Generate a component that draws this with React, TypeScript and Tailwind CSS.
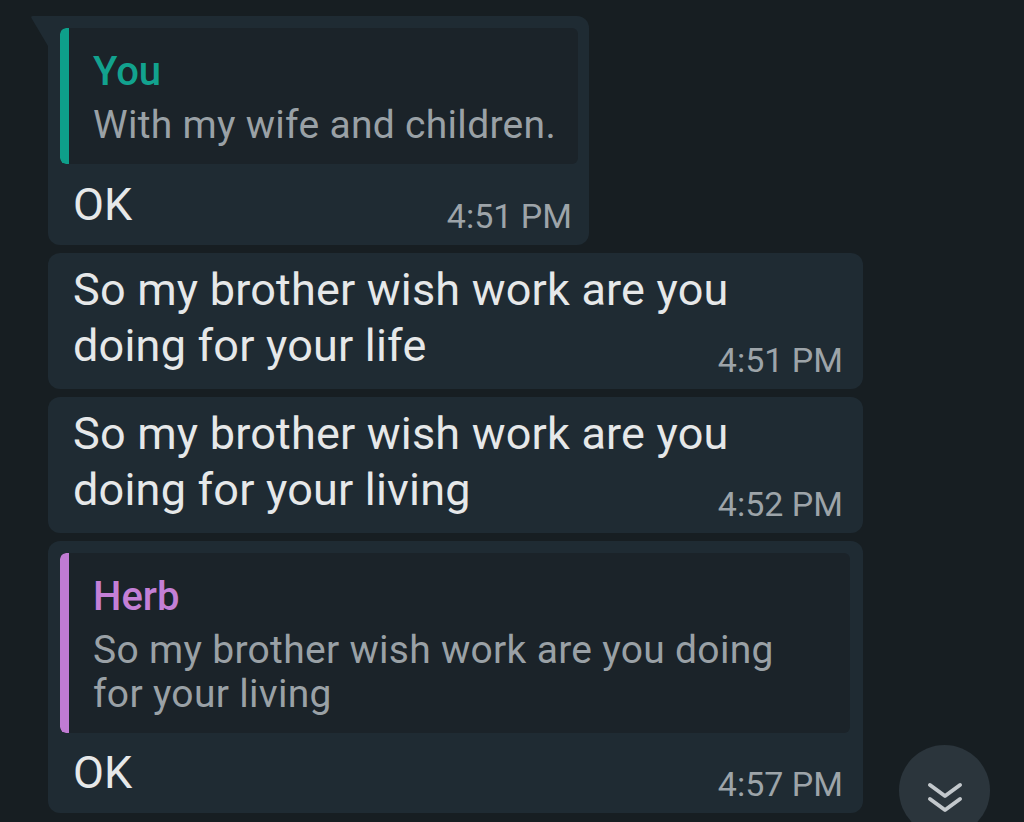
import { ReactNode } from 'react'

const Quote = ({
  name,
  color,
  bar,
  children,
}: {
  name: string
  color: string
  bar: string
  children: ReactNode
}) => {
  return (
    <div className="flex rounded-[6px] bg-[#1b2329] overflow-hidden">
      <div className={`w-[9px] shrink-0 rounded-l-[6px] ${bar}`}></div>
      <div className="pl-[24px] pr-[20px] pt-[21px] pb-[17px]">
        <div className={`text-[40px] leading-[45px] font-medium ${color}`}>
          {name}
        </div>
        <div className="mt-[9px] text-[39px] leading-[44px] tracking-[0.3px] text-[#9aa1a6]">
          {children}
        </div>
      </div>
    </div>
  )
}

const Time = ({ t, className }: { t: string; className: string }) => (
  <div
    className={`flex justify-end text-[34px] leading-[40px] text-[#9da4a9] ${className}`}
  >
    {t}
  </div>
)

export default function App() {
  return (
    <div
      className="relative h-[822px] w-[1024px] overflow-hidden bg-[#171e22]"
      style={{ fontFamily: 'Roboto, "Noto Sans", sans-serif' }}
    >
      <div className="flex flex-col gap-[8px] pl-[48px] pt-[16px]">
        {/* reply from me */}
        <div className="relative w-[541px] rounded-[12px] rounded-tl-none bg-[#1f2b33] pt-[12px] pl-[12px] pr-[11px] pb-[9px]">
          <svg
            className="absolute left-[-18px] top-0"
            width="18"
            height="30"
            viewBox="0 0 18 30"
          >
            <path d="M18 0 L3 0 Q0 0 2 3 L18 30 Z" fill="#1f2b33" />
          </svg>
          <Quote name="You" color="text-[#12a28e]" bar="bg-[#0e9f8a]">
            With my wife and children.
          </Quote>
          <div className="mt-[13px] pl-[13px] text-[45px] leading-[56px] text-[#e6e8e9]">
            OK
          </div>
          <Time t="4:51 PM" className="-mt-[37px] pr-[6px]" />
        </div>

        <div className="w-[815px] rounded-[12px] bg-[#1f2b33] pt-[9px] pl-[25px] pr-[20px] pb-[9px]">
          <div className="text-[45px] leading-[56px] tracking-[0.2px] text-[#e6e8e9]">
            So my brother wish work are you
            <br />
            doing for your life
          </div>
          <Time t="4:51 PM" className="-mt-[34px]" />
        </div>

        <div className="w-[815px] rounded-[12px] bg-[#1f2b33] pt-[9px] pl-[25px] pr-[20px] pb-[9px]">
          <div className="text-[45px] leading-[56px] tracking-[0.2px] text-[#e6e8e9]">
            So my brother wish work are you
            <br />
            doing for your living
          </div>
          <Time t="4:52 PM" className="-mt-[34px]" />
        </div>

        <div className="w-[815px] rounded-[12px] bg-[#1f2b33] pt-[12px] pl-[12px] pr-[13px] pb-[9px]">
          <Quote name="Herb" color="text-[#c47fd6]" bar="bg-[#c07bd3]">
            So my brother wish work are you doing
            <br />
            for your living
          </Quote>
          <div className="mt-[12px] pl-[13px] text-[45px] leading-[56px] text-[#e6e8e9]">
            OK
          </div>
          <Time t="4:57 PM" className="-mt-[37px] pr-[7px]" />
        </div>
      </div>

      {/* scroll to bottom */}
      <div className="absolute left-[899px] top-[745px] flex h-[91px] w-[91px] items-start justify-center rounded-full bg-[#2b353c] pt-[37px]">
        <svg width="36" height="32" viewBox="0 0 36 32" fill="none">
          <path
            d="M3 3 L18 14 L33 3 M3 17 L18 28 L33 17"
            stroke="#c3c8cc"
            strokeWidth="4"
            strokeLinecap="round"
            strokeLinejoin="round"
          />
        </svg>
      </div>
    </div>
  )
}
